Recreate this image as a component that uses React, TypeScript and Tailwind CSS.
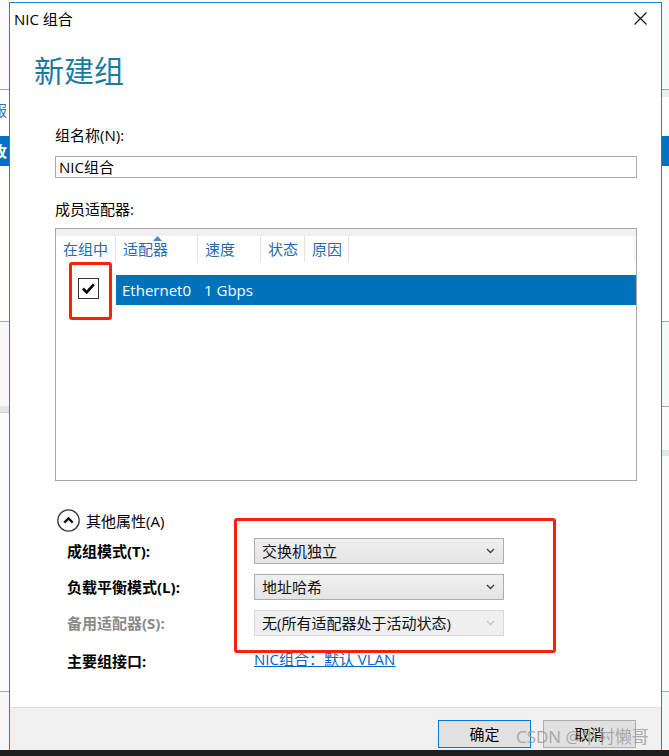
import React from "react";

const FONT = "font-['Open_Sans','Noto_Sans_CJK_SC',sans-serif]";

function Chevron({ disabled }: { disabled?: boolean }) {
  return (
    <svg width="9" height="6" viewBox="0 0 9 6">
      <path d="M1 1 L4.5 4.5 L8 1" fill="none" stroke={disabled ? "#c4c4c4" : "#3c3c3c"} strokeWidth="1.3" />
    </svg>
  );
}

function Select({ text, disabled }: { text: string; disabled?: boolean }) {
  return (
    <div
      className={
        disabled
          ? "h-[26px] w-[250px] border border-[#d9d9d9] bg-[#efefef] flex items-center justify-between pl-[7px] pr-[8px]"
          : "h-[26px] w-[250px] border border-[#adadad] bg-gradient-to-b from-[#f0f0f0] to-[#e4e4e4] flex items-center justify-between pl-[7px] pr-[8px]"
      }
    >
      <span className="text-[15px] leading-[20px] text-[#111]">{text}</span>
      <Chevron disabled={disabled} />
    </div>
  );
}

function LeftStrip() {
  return (
    <div className="w-[9px] flex flex-col overflow-hidden bg-[#f9f9f9] shrink-0">
      <div className="h-[89px] bg-[#fafafa]" />
      <div className="h-[1px] bg-[#a8a8a8]" />
      <div className="h-[46px] bg-white pt-[12px]">
        <div className="ml-[-8px] text-[15px] leading-[16px] text-[#3d6fb0] whitespace-nowrap">服</div>
      </div>
      <div className="h-[30px] bg-[#0072c6] flex items-center">
        <div className="ml-[-8px] text-[15px] leading-[16px] text-white font-bold whitespace-nowrap">牧</div>
      </div>
      <div className="h-[155px] bg-white" />
      <div className="h-[1px] bg-[#a8a8a8]" />
      <div className="h-[84px] bg-[#f8f8f8]" />
      <div className="h-[7px] bg-[#e4e4e4] border-b border-[#cfcfcf]" />
      <div className="h-[278px] bg-[#fbfbfb]" />
      <div className="h-[1px] bg-[#a8a8a8]" />
      <div className="flex-1 bg-[#f6f6f6]" />
    </div>
  );
}

function RightStrip() {
  return (
    <div className="flex-1 flex flex-col overflow-hidden bg-[#f8f8f8]">
      <div className="h-[89px] bg-[#f8f8f8]" />
      <div className="h-[1px] bg-[#a8a8a8]" />
      <div className="h-[7px] bg-[#ececec]" />
      <div className="h-[39px] bg-white" />
      <div className="h-[30px] bg-[#0072c6]" />
      <div className="h-[155px] bg-white" />
      <div className="h-[1px] bg-[#a8a8a8]" />
      <div className="h-[84px] bg-[#f8f8f8]" />
      <div className="h-[1px] bg-[#a8a8a8]" />
      <div className="h-[43px] bg-[#fbfbfb]" />
      <div className="h-[6px] bg-[#e6e6e6]" />
      <div className="h-[235px] bg-[#fbfbfb]" />
      <div className="h-[1px] bg-[#a8a8a8]" />
      <div className="flex-1 bg-[#f6f6f6]" />
    </div>
  );
}

export default function App() {
  return (
    <div className={`relative w-[669px] h-[756px] overflow-hidden bg-white flex flex-col text-black ${FONT}`}>
      <div className="flex flex-1 min-h-0">
        <LeftStrip />
        <div className="mt-[2px] w-[653px] shrink-0 border-x border-t border-[#1883d7] bg-white flex flex-col">
          {/* title bar */}
          <div className="h-[31px] flex items-center justify-between pl-[4px] pr-[14px]">
            <span className="text-[15px] leading-[20px]">NIC 组合</span>
            <svg width="13" height="13" viewBox="0 0 13 13">
              <path d="M0.5 0.5 L12.5 12.5 M12.5 0.5 L0.5 12.5" stroke="#111" strokeWidth="1.1" />
            </svg>
          </div>
          {/* heading */}
          <div className="mt-[17px] pl-[24px] text-[30px] leading-[40px] text-[#1f7aa0]">新建组</div>

          {/* body */}
          <div className="pl-[45px] pr-[24px] flex flex-col">
            <div className="mt-[34px] text-[15px] leading-[20px]">组名称(N):</div>
            <div className="mt-[11px] h-[22px] border border-[#acacac] px-[3px] flex items-center text-[15px] leading-[20px]">
              NIC组合
            </div>
            <div className="mt-[21px] text-[15px] leading-[20px]">成员适配器:</div>

            {/* table */}
            <div className="mt-[9px] h-[253px] border border-[#a6a6a6] flex flex-col">
              <div className="h-[7px] bg-[#f0f0f0]" />
              <div className="h-[26px] flex text-[15px] leading-[20px] text-[#2a69b0]">
                <div className="w-[60px] border-r border-[#e3e3e3] pl-[7px] flex items-center">在组中</div>
                <div className="relative w-[82px] border-r border-[#e3e3e3] pl-[7px] flex items-center">
                  适配器
                  <svg className="absolute left-[37px] top-[0px]" width="9" height="5" viewBox="0 0 9 5">
                    <path d="M0 5 L4.5 0 L9 5 Z" fill="#4f86c8" />
                  </svg>
                </div>
                <div className="w-[63px] border-r border-[#e3e3e3] pl-[7px] flex items-center">速度</div>
                <div className="w-[44px] border-r border-[#e3e3e3] pl-[7px] flex items-center">状态</div>
                <div className="w-[44px] border-r border-[#e3e3e3] pl-[7px] flex items-center">原因</div>
                <div className="flex-1 mr-[1px] border-r border-[#ececec]" />
              </div>
              <div className="mt-[13px] h-[30px] flex">
                <div className="w-[60px] pl-[22px] pt-[3px]">
                  <div className="w-[21px] h-[21px] border border-[#333] bg-white flex items-center justify-center">
                    <svg width="17" height="17" viewBox="0 0 17 17">
                      <path d="M3 8.5 L6.7 12.3 L13.8 4.3" fill="none" stroke="#000" strokeWidth="2.6" />
                    </svg>
                  </div>
                </div>
                <div className="flex-1 bg-[#0072bc] flex items-center text-white text-[15px] leading-[20px]">
                  <div className="w-[82px] pl-[6px]">Ethernet0</div>
                  <div className="pl-[6px]">1 Gbps</div>
                </div>
              </div>
            </div>

            {/* more properties */}
            <div className="mt-[28px] ml-[2px] h-[23px] flex items-center gap-[6px]">
              <svg width="23" height="23" viewBox="0 0 23 23">
                <circle cx="11.5" cy="11.5" r="10.7" fill="none" stroke="#3a3a3a" strokeWidth="1.3" />
                <path d="M7.3 13.6 L11.5 9.4 L15.7 13.6" fill="none" stroke="#111" strokeWidth="2.3" />
              </svg>
              <span className="text-[15px] leading-[20px]">其他属性(A)</span>
            </div>

            <div className="mt-[6px] grid grid-cols-[199px_250px] auto-rows-[26px] gap-y-[10px] text-[15px] leading-[20px]">
              <div className="pl-[12px] flex items-center font-bold">成组模式(T):</div>
              <Select text="交换机独立" />
              <div className="pl-[12px] flex items-center font-bold">负载平衡模式(L):</div>
              <Select text="地址哈希" />
              <div className="pl-[12px] flex items-center font-bold text-[#8a8a8a]">备用适配器(S):</div>
              <Select text="无(所有适配器处于活动状态)" disabled />
              <div className="pl-[12px] flex items-center font-bold pt-[3px]">主要组接口:</div>
              <div className="flex items-center">
                <span className="text-[#0066cc] underline">NIC组合：默认 VLAN</span>
              </div>
            </div>
          </div>

          <div className="flex-1" />

          {/* footer */}
          <div className="h-[43px] border-t border-[#dfdfdf] bg-[#f0f0f0] flex justify-end items-start gap-[12px] pt-[12px] pr-[25px]">
            <div className="w-[93px] h-[28px] border border-[#0078d7] bg-[#e1e1e1] flex items-center justify-center text-[15px] leading-[20px]">
              确定
            </div>
            <div className="w-[93px] h-[28px] border border-[#adadad] bg-[#e1e1e1] flex items-center justify-center text-[15px] leading-[20px]">
              取消
            </div>
          </div>
        </div>
        <RightStrip />
      </div>
      <div className="h-[6px] bg-[#1e1e1e]" />

      {/* annotation overlays */}
      <div className="absolute left-[69px] top-[262px] w-[43px] h-[58px] border-[3px] border-[#ff1f0f] rounded-[3px]" />
      <div className="absolute left-[234px] top-[518px] w-[322px] h-[135px] border-[3px] border-[#ff1f0f] rounded-[3px]" />
      <div className="absolute left-[516px] top-[725px] text-[17px] leading-[24px] text-[#9a9a9a] opacity-80 whitespace-nowrap">
        CSDN @半村懒哥
      </div>
    </div>
  );
}
